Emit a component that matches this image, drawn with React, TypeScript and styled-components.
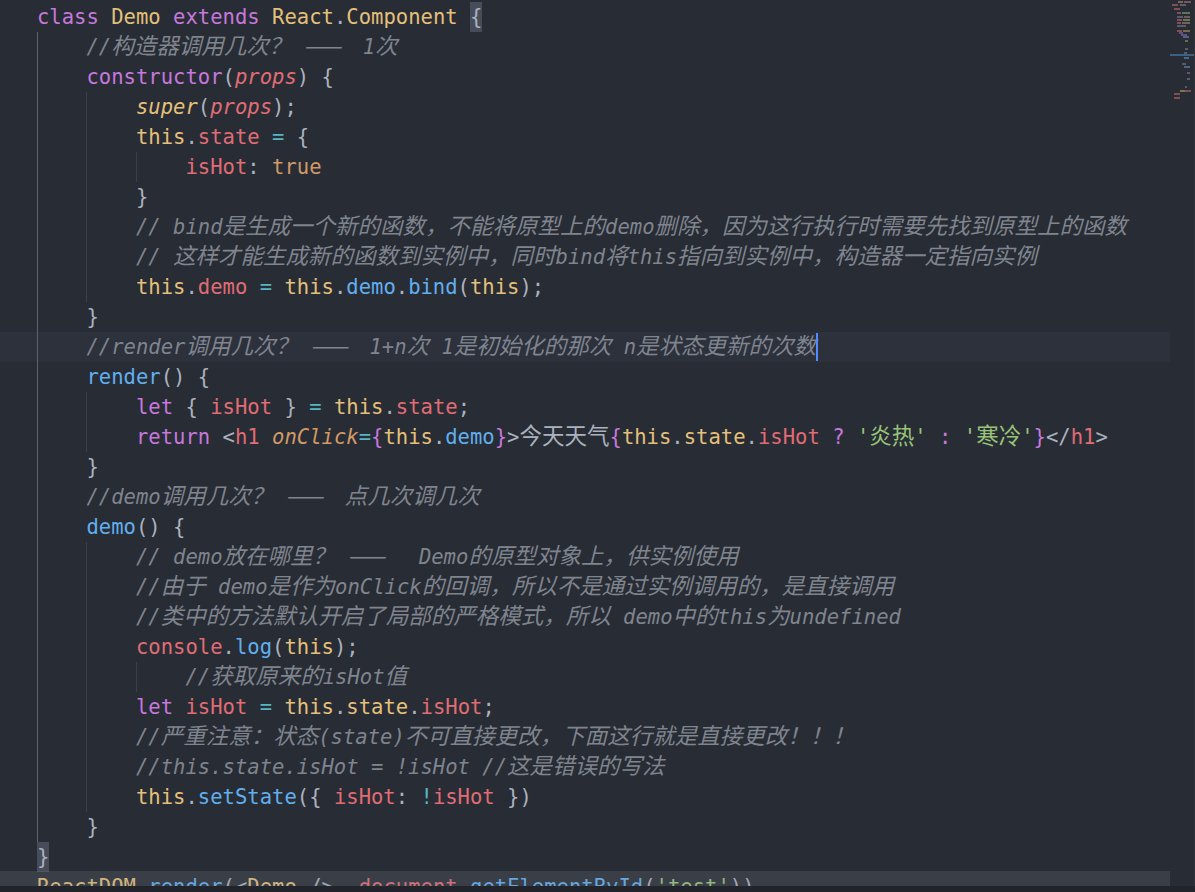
import React from 'react';
import styled, { createGlobalStyle } from 'styled-components';

type Kind =
  | 'kw'
  | 'cls'
  | 'fn'
  | 'ctor'
  | 'param'
  | 'sup'
  | 'this'
  | 'prop'
  | 'p'
  | 'op'
  | 'bool'
  | 'str'
  | 'cm'
  | 'tag'
  | 'attr'
  | 'jsx'
  | 'match';

type Tok = [Kind, string];

interface CodeLine {
  indent: number;
  tokens: Tok[];
  active?: boolean;
  cursor?: boolean;
}

const colors: Record<Kind, string> = {
  kw: '#c678dd',
  cls: '#e5c07b',
  fn: '#61afef',
  ctor: '#c678dd',
  param: '#e06c75',
  sup: '#e5c07b',
  this: '#e5c07b',
  prop: '#e06c75',
  p: '#abb2bf',
  op: '#56b6c2',
  bool: '#d19a66',
  str: '#98c379',
  cm: '#7f848e',
  tag: '#e06c75',
  attr: '#d19a66',
  jsx: '#c678dd',
  match: '#abb2bf',
};

const italic: Kind[] = ['param', 'sup', 'cm', 'attr'];

const GlobalStyle = createGlobalStyle`
  html, body {
    margin: 0;
    padding: 0;
    background: #282c34;
    overflow: hidden;
  }
`;

const Window = styled.div`
  width: 1195px;
  height: 892px;
  display: flex;
  flex-direction: column;
  background: #282c34;
  font-family: 'DejaVu Sans Mono', 'Noto Sans CJK SC', monospace;
  font-size: 20.55px;
`;

const Main = styled.div`
  position: relative;
  flex: 1;
  display: flex;
  overflow: hidden;
`;

const Editor = styled.div`
  flex: 1;
  display: flex;
  flex-direction: column;
  padding-top: 2px;
`;

const Line = styled.div<{ $active?: boolean }>`
  display: flex;
  flex-shrink: 0;
  height: 30px;
  line-height: 30px;
  padding-left: 37px;
  white-space: pre;
  background: ${(p) => (p.$active ? '#2c313c' : 'transparent')};
`;

const Guide = styled.span<{ $active?: boolean }>`
  flex-shrink: 0;
  width: 4ch;
  height: 30px;
  box-sizing: border-box;
  border-left: 1px solid ${(p) => (p.$active ? '#5b616e' : '#3b4048')};
`;

const Token = styled.span<{ $kind: Kind }>`
  color: ${(p) => colors[p.$kind]};
  font-style: ${(p) => (italic.includes(p.$kind) ? 'italic' : 'normal')};
  background: ${(p) => (p.$kind === 'match' ? '#464c5a' : 'transparent')};
`;

const Wide = styled.span`
  font-family: 'Noto Sans CJK SC', sans-serif;
  font-size: 22.5px;
  line-height: 1;
`;

const Dash = styled(Wide)`
  letter-spacing: 9px;
`;

const Caret = styled.span`
  width: 2px;
  height: 28px;
  margin-top: 1px;
  background: #528bff;
`;

const Minimap = styled.div`
  width: 25px;
  flex-shrink: 0;
  border-right: 1px solid #2f343d;
  box-sizing: border-box;
`;

const ScrollTrack = styled.div`
  position: absolute;
  left: 0;
  bottom: 0;
  width: 1170px;
  height: 15px;
  background: rgba(125, 134, 152, 0.2);
`;

const BottomBar = styled.div`
  height: 6px;
  flex-shrink: 0;
  background: #21252b;
`;

const CJK = /(—+|[\u3000-\u303f\u3400-\u9fff\uff00-\uffef]+)/;

function renderText(text: string) {
  return text.split(CJK).map((s, i) => {
    if (i % 2 === 0) return s;
    return s.startsWith('—') ? <Dash key={i}>{s}</Dash> : <Wide key={i}>{s}</Wide>;
  });
}

const lines: CodeLine[] = [
  {
    indent: 0,
    tokens: [
      ['kw', 'class'],
      ['p', ' '],
      ['cls', 'Demo'],
      ['p', ' '],
      ['kw', 'extends'],
      ['p', ' '],
      ['cls', 'React'],
      ['p', '.'],
      ['cls', 'Component'],
      ['p', ' '],
      ['match', '{'],
    ],
  },
  { indent: 1, tokens: [['cm', '//构造器调用几次？ —— 1次']] },
  {
    indent: 1,
    tokens: [
      ['ctor', 'constructor'],
      ['p', '('],
      ['param', 'props'],
      ['p', ') {'],
    ],
  },
  {
    indent: 2,
    tokens: [
      ['sup', 'super'],
      ['p', '('],
      ['param', 'props'],
      ['p', ');'],
    ],
  },
  {
    indent: 2,
    tokens: [
      ['this', 'this'],
      ['p', '.'],
      ['prop', 'state'],
      ['p', ' '],
      ['op', '='],
      ['p', ' {'],
    ],
  },
  {
    indent: 3,
    tokens: [
      ['prop', 'isHot'],
      ['p', ': '],
      ['bool', 'true'],
    ],
  },
  { indent: 2, tokens: [['p', '}']] },
  { indent: 2, tokens: [['cm', '// bind是生成一个新的函数，不能将原型上的demo删除，因为这行执行时需要先找到原型上的函数']] },
  { indent: 2, tokens: [['cm', '// 这样才能生成新的函数到实例中，同时bind将this指向到实例中，构造器一定指向实例']] },
  {
    indent: 2,
    tokens: [
      ['this', 'this'],
      ['p', '.'],
      ['prop', 'demo'],
      ['p', ' '],
      ['op', '='],
      ['p', ' '],
      ['this', 'this'],
      ['p', '.'],
      ['fn', 'demo'],
      ['p', '.'],
      ['fn', 'bind'],
      ['p', '('],
      ['this', 'this'],
      ['p', ');'],
    ],
  },
  { indent: 1, tokens: [['p', '}']] },
  {
    indent: 1,
    active: true,
    cursor: true,
    tokens: [['cm', '//render调用几次？ —— 1+n次 1是初始化的那次 n是状态更新的次数']],
  },
  {
    indent: 1,
    tokens: [
      ['fn', 'render'],
      ['p', '() {'],
    ],
  },
  {
    indent: 2,
    tokens: [
      ['kw', 'let'],
      ['p', ' { '],
      ['prop', 'isHot'],
      ['p', ' } '],
      ['op', '='],
      ['p', ' '],
      ['this', 'this'],
      ['p', '.'],
      ['prop', 'state'],
      ['p', ';'],
    ],
  },
  {
    indent: 2,
    tokens: [
      ['kw', 'return'],
      ['p', ' <'],
      ['tag', 'h1'],
      ['p', ' '],
      ['attr', 'onClick'],
      ['op', '='],
      ['jsx', '{'],
      ['this', 'this'],
      ['p', '.'],
      ['fn', 'demo'],
      ['jsx', '}'],
      ['p', '>今天天气'],
      ['jsx', '{'],
      ['this', 'this'],
      ['p', '.'],
      ['this', 'state'],
      ['p', '.'],
      ['prop', 'isHot'],
      ['p', ' '],
      ['jsx', '?'],
      ['p', ' '],
      ['str', "'炎热'"],
      ['p', ' '],
      ['jsx', ':'],
      ['p', ' '],
      ['str', "'寒冷'"],
      ['jsx', '}'],
      ['p', '</'],
      ['tag', 'h1'],
      ['p', '>'],
    ],
  },
  { indent: 1, tokens: [['p', '}']] },
  { indent: 1, tokens: [['cm', '//demo调用几次？ —— 点几次调几次']] },
  {
    indent: 1,
    tokens: [
      ['fn', 'demo'],
      ['p', '() {'],
    ],
  },
  { indent: 2, tokens: [['cm', '// demo放在哪里？ ——  Demo的原型对象上，供实例使用']] },
  { indent: 2, tokens: [['cm', '//由于 demo是作为onClick的回调，所以不是通过实例调用的，是直接调用']] },
  { indent: 2, tokens: [['cm', '//类中的方法默认开启了局部的严格模式，所以 demo中的this为undefined']] },
  {
    indent: 2,
    tokens: [
      ['prop', 'console'],
      ['p', '.'],
      ['fn', 'log'],
      ['p', '('],
      ['this', 'this'],
      ['p', ');'],
    ],
  },
  { indent: 3, tokens: [['cm', '//获取原来的isHot值']] },
  {
    indent: 2,
    tokens: [
      ['kw', 'let'],
      ['p', ' '],
      ['prop', 'isHot'],
      ['p', ' '],
      ['op', '='],
      ['p', ' '],
      ['this', 'this'],
      ['p', '.'],
      ['this', 'state'],
      ['p', '.'],
      ['prop', 'isHot'],
      ['p', ';'],
    ],
  },
  { indent: 2, tokens: [['cm', '//严重注意：状态(state)不可直接更改，下面这行就是直接更改！！！']] },
  { indent: 2, tokens: [['cm', '//this.state.isHot = !isHot //这是错误的写法']] },
  {
    indent: 2,
    tokens: [
      ['this', 'this'],
      ['p', '.'],
      ['fn', 'setState'],
      ['p', '({ '],
      ['prop', 'isHot'],
      ['p', ': '],
      ['op', '!'],
      ['prop', 'isHot'],
      ['p', ' })'],
    ],
  },
  { indent: 1, tokens: [['p', '}']] },
  { indent: 0, tokens: [['match', '}']] },
  {
    indent: 0,
    tokens: [
      ['cls', 'ReactDOM'],
      ['p', '.'],
      ['fn', 'render'],
      ['p', '(<'],
      ['cls', 'Demo'],
      ['p', ' />, '],
      ['prop', 'document'],
      ['p', '.'],
      ['fn', 'getElementById'],
      ['p', '('],
      ['str', "'test'"],
      ['p', '))'],
    ],
  },
];

// tiny overview of the file: [y, x, width, colour]
const miniRows: [number, number, number, string][] = [
  [1, 6, 5, '#9a7a5a'],
  [1, 12, 7, '#8a6a6a'],
  [4, 0, 6, '#a05a60'],
  [4, 8, 6, '#7a6a8a'],
  [8, 2, 6, '#a05a60'],
  [12, 5, 4, '#a05a60'],
  [12, 10, 8, '#7a8a5a'],
  [16, 5, 6, '#6a6a80'],
  [16, 12, 6, '#8a6a6a'],
  [19, 5, 5, '#a05a60'],
  [19, 11, 7, '#8a8a6a'],
  [22, 5, 4, '#a05a60'],
  [22, 10, 8, '#8a7a5a'],
  [25, 5, 9, '#6a6e78'],
  [30, 5, 5, '#a05a60'],
  [30, 11, 7, '#9a7a5a'],
  [32, 7, 4, '#7a5a9a'],
  [34, 9, 6, '#7a5a9a'],
  [36, 11, 6, '#5a7aa0'],
  [40, 13, 3, '#8a7a5a'],
  [48, 13, 3, '#6a6e78'],
  [52, 12, 3, '#6a6e78'],
  [57, 12, 5, '#5a7aa0'],
  [63, 10, 4, '#6a6e78'],
  [66, 12, 6, '#5a7aa0'],
  [72, 15, 3, '#7a5a9a'],
  [78, 15, 3, '#6a6e78'],
  [86, 13, 2, '#6a6e78'],
  [90, 8, 5, '#a08a50'],
  [90, 13, 6, '#a05a60'],
  [93, 2, 6, '#a05a60'],
  [97, 2, 6, '#a05a60'],
];

function MiniOverview() {
  return (
    <svg width="24" height="110" viewBox="0 0 24 110">
      <rect x="0" y="54" width="24" height="2" fill="#3c5f86" />
      {miniRows.map(([y, x, w, c], i) => (
        <rect key={i} x={x + 2} y={y} width={w} height="2" fill={c} opacity="0.75" />
      ))}
    </svg>
  );
}

export default function App() {
  return (
    <Window>
      <GlobalStyle />
      <Main>
        <Editor>
          {lines.map((line, i) => (
            <Line key={i} $active={line.active}>
              {Array.from({ length: line.indent }).map((_, g) => (
                <Guide key={g} $active={g === 0} />
              ))}
              {line.tokens.map(([kind, text], j) => (
                <Token key={j} $kind={kind}>
                  {renderText(text)}
                </Token>
              ))}
              {line.cursor && <Caret />}
            </Line>
          ))}
        </Editor>
        <Minimap>
          <MiniOverview />
        </Minimap>
        <ScrollTrack />
      </Main>
      <BottomBar />
    </Window>
  );
}
